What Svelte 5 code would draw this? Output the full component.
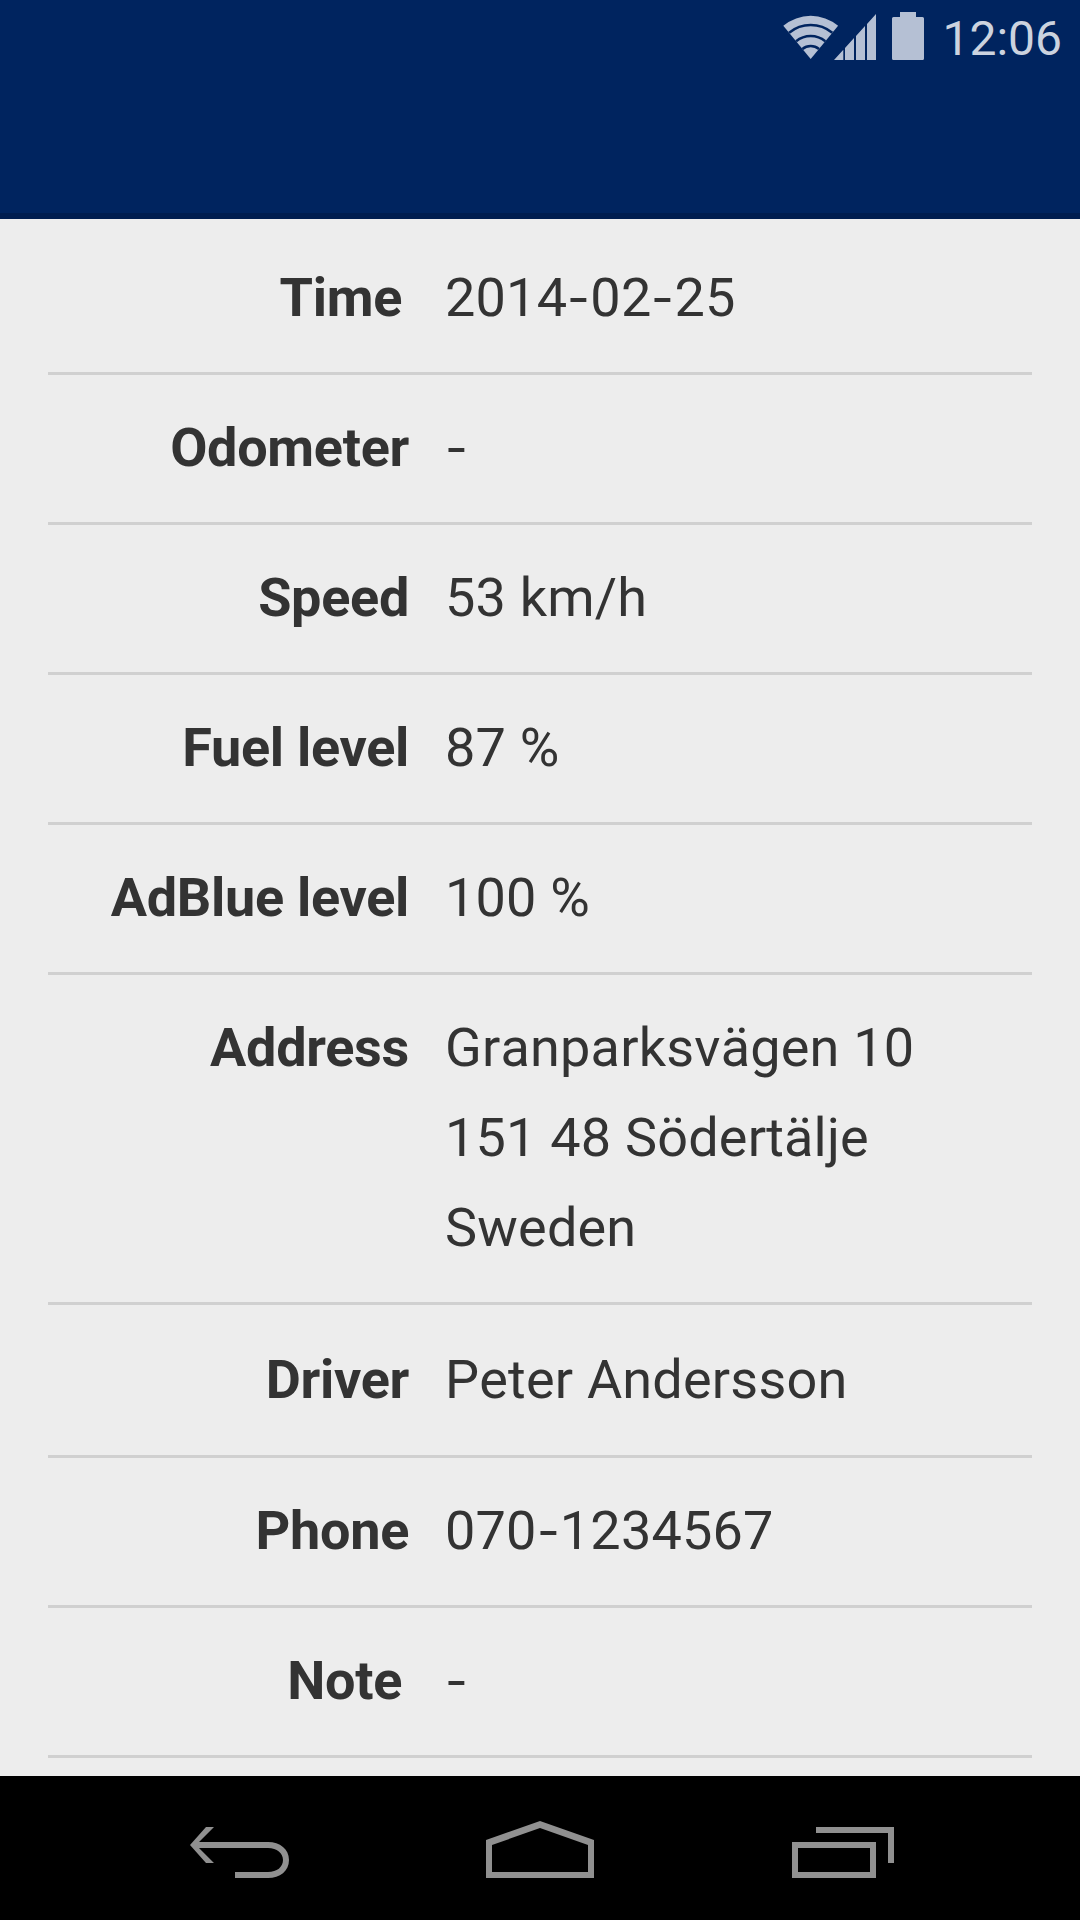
<script>
    const rows = [
        { label: "Time", lines: ["2014-02-25"], inset: true },
        { label: "Odometer", lines: ["-"] },
        { label: "Speed", lines: ["53 km/h"] },
        { label: "Fuel level", lines: ["87 %"] },
        { label: "AdBlue level", lines: ["100 %"] },
        { label: "Address", lines: ["Granparksvägen 10", "151 48 Södertälje", "Sweden"] },
        { label: "Driver", lines: ["Peter Andersson"], tall: true },
        { label: "Phone", lines: ["070-1234567"] },
        { label: "Note", lines: ["-"], inset: true }
    ];
</script>

<div class="screen">
    <header class="header">
        <div class="status">
            <svg class="status-icons" width="144" height="60" viewBox="783 0 144 60">
                <path class="glyph" d="M810.7 59L783.3 25.7A43.1 43.1 0 0 1 838.1 25.7Z" />
                <g class="gaps">
                    <path d="M789.1 32.8A34 34 0 0 1 832.3 32.8" />
                    <path d="M796.1 41.2A23 23 0 0 1 825.3 41.2" />
                    <path d="M802.4 49A13 13 0 0 1 819 49" />
                </g>
                <path class="glyph" d="M834 60L843.3 49.8V60ZM845 48L854 38V60H845ZM856 36L865 26V60H856ZM867 24L876 14V60H867Z" />
                <path class="glyph" d="M900 12H916V17H922.5Q924 17 924 18.5V58.5Q924 60 922.5 60H893.5Q892 60 892 58.5V18.5Q892 17 893.5 17H900Z" />
            </svg>
            <span class="clock">12:06</span>
        </div>
    </header>

    <main class="details">
        {#each rows as row}
            <div class="row" class:tall={row.tall}>
                <div class="label" class:inset={row.inset}>{row.label}</div>
                <div class="value">
                    {#each row.lines as line}
                        <div>{#each line.split(/(-)/) as part}{#if part === "-"}<span class="dash">-</span>{:else}{part}{/if}{/each}</div>
                    {/each}
                </div>
            </div>
        {/each}
    </main>

    <nav class="nav">
        <svg width="120" height="80" viewBox="0 0 120 80">
            <path d="M26 17H34L19 32H88C100 32 109 39 109 50C109 61 100 68 88 68H55V62H88C97 62 103 57 103 50C103 43 97 38 88 38H19L34 53H26L10 35Z" />
        </svg>
        <svg width="120" height="80" viewBox="0 0 120 80">
            <path fill-rule="evenodd" d="M60 11L114 30V68H6V30ZM60 18L12 35V62H108V35Z" />
        </svg>
        <svg width="120" height="80" viewBox="0 0 120 80">
            <path d="M36 17H114V53H108V23H36Z" />
            <path fill-rule="evenodd" d="M12 32H96V68H12ZM18 38V62H90V38Z" />
        </svg>
    </nav>
</div>

<style>
    :global(body) {
        margin: 0;
        background-color: #ededed;
    }

    .screen {
        display: flex;
        flex-direction: column;
        width: 1080px;
        height: 1920px;
        overflow: hidden;
        font-family: Roboto, sans-serif;
        background-color: #ededed;
    }

    .header {
        flex: none;
        box-sizing: border-box;
        height: 219px;
        background-color: #00245f;
        border-bottom: 6px solid #001d4f;
    }

    .status {
        display: flex;
        justify-content: flex-end;
        align-items: flex-start;
        gap: 15px;
        padding-right: 18px;
    }

    .status-icons {
        display: block;
    }

    .glyph {
        fill: #b5c0d4;
    }

    .gaps path {
        fill: none;
        stroke: #00245f;
        stroke-width: 2.5;
    }

    .clock {
        font-size: 48px;
        line-height: 78px;
        color: #ccd3df;
    }

    .details {
        flex: 1;
        padding: 6px 48px 0;
        color: #333333;
        font-size: 54px;
    }

    .row {
        display: grid;
        grid-template-columns: 361px 1fr;
        column-gap: 36px;
        padding: 28px 0 29px;
        line-height: 90px;
        border-bottom: 3px solid #d0d0d0;
    }

    .row.tall {
        padding: 30px 0 30px;
    }

    .label {
        text-align: right;
        font-weight: 700;
        letter-spacing: -0.3px;
    }

    .label.inset {
        padding-right: 7px;
    }

    .value {
        font-kerning: none;
        letter-spacing: 0.2px;
    }

    .dash {
        display: inline-block;
        margin: 0 4px;
        transform: scaleX(1.23);
    }

    .nav {
        flex: none;
        display: flex;
        justify-content: center;
        align-items: flex-start;
        gap: 180px;
        box-sizing: border-box;
        height: 144px;
        padding-top: 34px;
        background-color: #000000;
    }

    .nav path {
        fill: #909090;
    }
</style>
